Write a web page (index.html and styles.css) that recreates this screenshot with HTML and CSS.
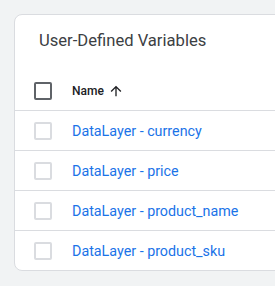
FILE: index.html
```html
<!DOCTYPE html>
<html lang="en">
<head>
    <meta charset="utf-8" />
    <title>User-Defined Variables</title>
    <link rel="stylesheet" href="styles.css">
</head>
<body>
    <div class="card">
        <h2 class="card-title">User-Defined Variables</h2>
        <div class="row header-row">
            <span class="checkbox checkbox-dark"></span>
            <span class="col-name">
                Name
                <svg class="sort-icon" viewBox="0 0 24 24" width="16" height="16">
                    <path d="M4 12l1.41 1.41L11 7.83V20h2V7.83l5.58 5.59L20 12l-8-8-8 8z" fill="#202124"/>
                </svg>
            </span>
        </div>
        <div class="row">
            <span class="checkbox"></span>
            <a href="#" class="var-link">DataLayer - currency</a>
        </div>
        <div class="row">
            <span class="checkbox"></span>
            <a href="#" class="var-link">DataLayer - price</a>
        </div>
        <div class="row">
            <span class="checkbox"></span>
            <a href="#" class="var-link">DataLayer - product_name</a>
        </div>
        <div class="row last-row">
            <span class="checkbox"></span>
            <a href="#" class="var-link">DataLayer - product_sku</a>
        </div>
    </div>
</body>
</html>
```
FILE: styles.css
```css
html, body {
    margin: 0;
    background-color: #f1f3f4;
    overflow: hidden;
}

body {
    padding: 14px 0 0 14px;
    font-family: Roboto, "Liberation Sans", sans-serif;
}

.card {
    width: 400px;
    background-color: #fff;
    border: 1px solid #dadce0;
    border-radius: 8px;
}

.card-title {
    margin: 0;
    padding: 14px 24px 19px 24px;
    font-size: 16.6px;
    line-height: 24px;
    font-weight: 400;
    color: #3c4043;
}

.row {
    display: flex;
    align-items: center;
    height: 39px;
    padding-left: 19px;
    border-bottom: 1px solid #dadce0;
}

.header-row {
    height: 38px;
}

.last-row {
    border-bottom: none;
}

.checkbox {
    box-sizing: border-box;
    width: 18px;
    height: 18px;
    border: 2px solid #dadce0;
    border-radius: 2px;
    margin-right: 20px;
    flex-shrink: 0;
}

.checkbox-dark {
    border-color: #5f6368;
}

.col-name {
    display: flex;
    align-items: center;
    gap: 4px;
    font-size: 12px;
    font-weight: 500;
    color: #202124;
}

.var-link {
    font-size: 14.3px;
    color: #1a73e8;
    text-decoration: none;
}
```
